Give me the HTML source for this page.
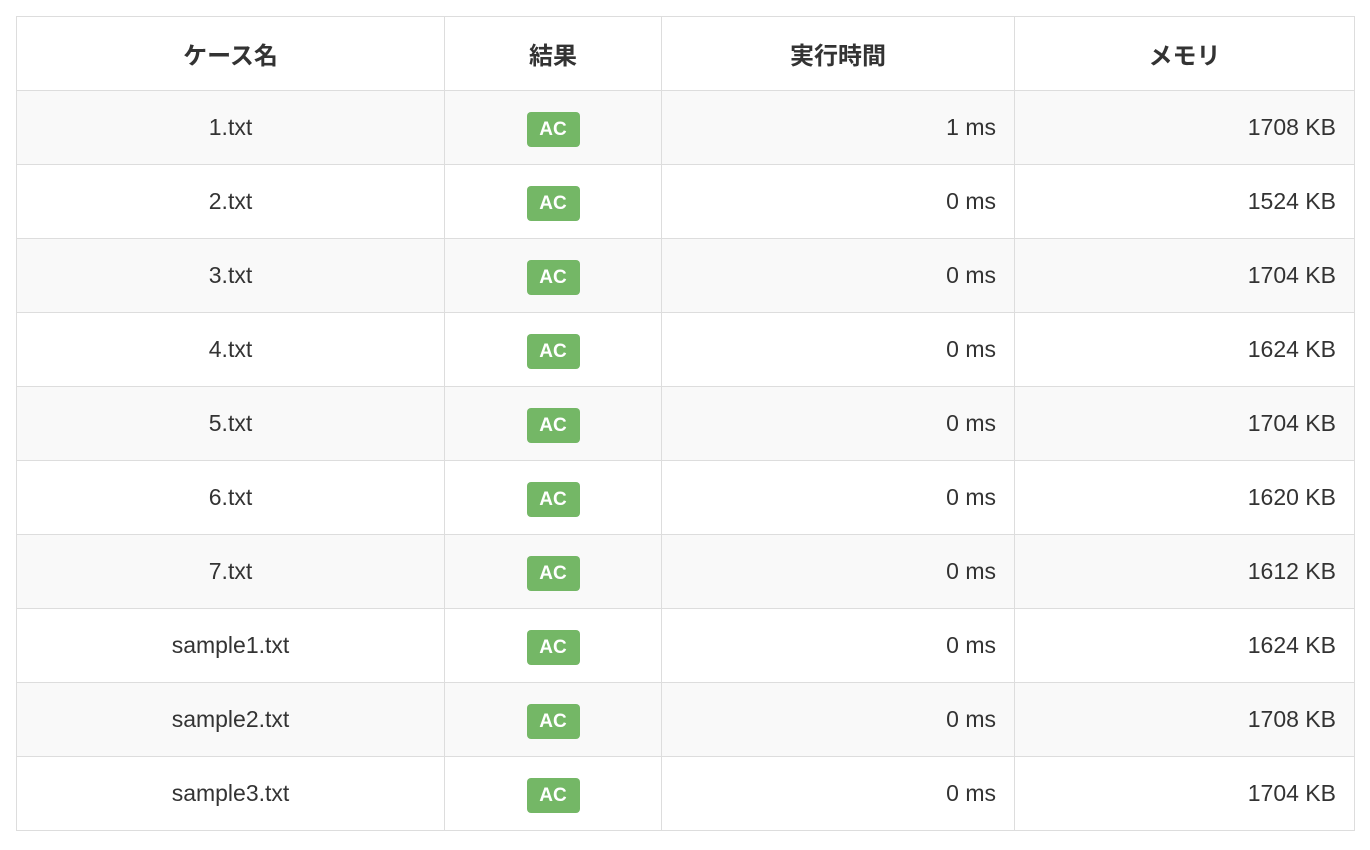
<!DOCTYPE html>
<html><head><meta charset="utf-8"><style>
html,body{margin:0;background:#fff;}
body{font-family:"Liberation Sans","Noto Sans CJK JP",sans-serif;color:#333;}
table{position:absolute;left:16px;top:16px;width:1338px;border-collapse:collapse;border:1px solid #ddd;table-layout:fixed;}
td,th{border:1px solid #ddd;height:74px;padding:0 18px;font-size:23px;box-sizing:border-box;}
th{font-weight:bold;text-align:center;font-size:24px;}
tbody tr:nth-child(odd){background:#f9f9f9;}
td.c{text-align:center;} td.r{text-align:right;}
.b{display:inline-block;width:53px;height:35px;line-height:35px;background:#74b766;color:#fff;font-weight:bold;font-size:19px;border-radius:4px;text-align:center;vertical-align:middle;margin-top:4px;}
</style></head><body>
<table>
<colgroup><col style="width:428px"><col style="width:217px"><col style="width:353px"><col style="width:340px"></colgroup>
<thead><tr><th>ケース名</th><th>結果</th><th>実行時間</th><th>メモリ</th></tr></thead>
<tbody>
<tr><td class="c">1.txt</td><td class="c"><span class="b">AC</span></td><td class="r">1 ms</td><td class="r">1708 KB</td></tr>
<tr><td class="c">2.txt</td><td class="c"><span class="b">AC</span></td><td class="r">0 ms</td><td class="r">1524 KB</td></tr>
<tr><td class="c">3.txt</td><td class="c"><span class="b">AC</span></td><td class="r">0 ms</td><td class="r">1704 KB</td></tr>
<tr><td class="c">4.txt</td><td class="c"><span class="b">AC</span></td><td class="r">0 ms</td><td class="r">1624 KB</td></tr>
<tr><td class="c">5.txt</td><td class="c"><span class="b">AC</span></td><td class="r">0 ms</td><td class="r">1704 KB</td></tr>
<tr><td class="c">6.txt</td><td class="c"><span class="b">AC</span></td><td class="r">0 ms</td><td class="r">1620 KB</td></tr>
<tr><td class="c">7.txt</td><td class="c"><span class="b">AC</span></td><td class="r">0 ms</td><td class="r">1612 KB</td></tr>
<tr><td class="c">sample1.txt</td><td class="c"><span class="b">AC</span></td><td class="r">0 ms</td><td class="r">1624 KB</td></tr>
<tr><td class="c">sample2.txt</td><td class="c"><span class="b">AC</span></td><td class="r">0 ms</td><td class="r">1708 KB</td></tr>
<tr><td class="c">sample3.txt</td><td class="c"><span class="b">AC</span></td><td class="r">0 ms</td><td class="r">1704 KB</td></tr>
</tbody></table>
</body></html>
